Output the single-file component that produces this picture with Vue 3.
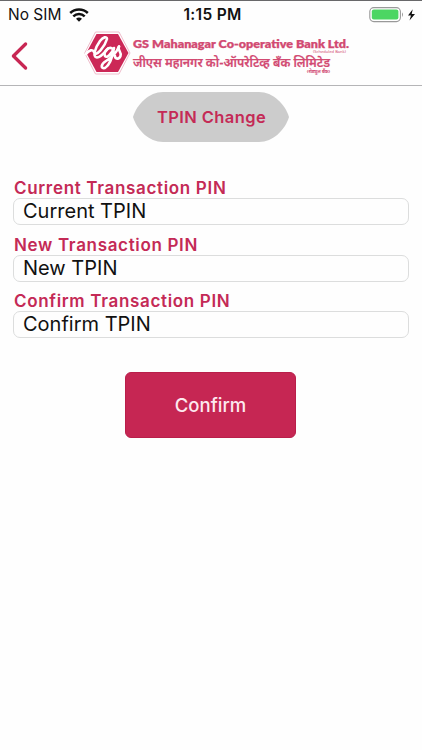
<script setup>
const fields = [
  { id: 'current', label: 'Current Transaction PIN', value: 'Current TPIN' },
  { id: 'new', label: 'New Transaction PIN', value: 'New TPIN' },
  { id: 'confirm', label: 'Confirm Transaction PIN', value: 'Confirm TPIN' },
]
</script>

<template>
  <main class="screen">
    <div class="status">
      <div class="carrier">
        <span>No SIM</span>
        <svg class="wifi" width="20" height="14" viewBox="0 0 20 14" fill="none" stroke="#111" stroke-width="2.5">
          <path d="M1.2 5 C6 .2 14 .2 18.8 5" />
          <path d="M4.3 8.3 C7.6 5.1 12.4 5.1 15.7 8.3" />
          <path d="M7 10.8 Q10 8.2 13 10.8 L10 13.7Z" fill="#111" stroke="none" />
        </svg>
      </div>
      <span class="time">1:15 PM</span>
      <svg class="battery" width="48" height="18" viewBox="0 0 48 18">
        <rect x=".8" y="1.6" width="30.6" height="14" rx="4" fill="#fff" stroke="#999" stroke-width="1.1" />
        <rect x="2.8" y="3.6" width="26.6" height="10" rx="2" fill="#4cd663" />
        <path d="M33 6.3 Q35 8.6 33 10.9Z" fill="#999" />
        <path d="M43.7 3.2 L39 9.6 H42 L40.5 14.6 L46 8 H42.7Z" fill="#111" />
      </svg>
    </div>

    <header class="nav">
      <svg class="back" width="18" height="30" viewBox="0 0 18 30" fill="none" stroke="#c82753" stroke-width="3.3" stroke-linecap="round" stroke-linejoin="round">
        <path d="M14.6 3 L2.4 15 L14.6 27" />
      </svg>
      <svg class="brand" width="270" height="48" viewBox="0 0 270 48">
        <path d="M10.5 2 H34 L45 23 L34 44 H10.5 L-.3 23Z" fill="#fff" stroke="#efbccb" stroke-width="1" />
        <path d="M11.5 4 H33 L43.5 23 L33 42 H11.5 L1.3 23Z" fill="#cc2857" />
        <g fill="none" stroke="#fff" stroke-linecap="round" stroke-linejoin="round" stroke-width="2.6">
          <path d="M1 24 C4 20 8 19 9 22 C11 28 20 16 22 9 C22 6 18 7 15 11 C10 18 7 27 12 27.500 C16 27.500 20 22 23 18.500" />
          <path d="M28 19 C24 15.500 18 22 20 26 C22 29 27 23 29 18 C28 24 25 35 20 38 C15 39 16 34 21 31 C26 28 31 24 34 16.500" />
          <path d="M34 16.500 C32 20 37 22 35.500 26 C34 30 30 29 30 26" />
        </g>
        <g fill="#d24a72" stroke="#d24a72">
          <text class="brand-en" x="48" y="17.500" textLength="216" lengthAdjust="spacingAndGlyphs" stroke-width=".25">GS Mahanagar Co-operative Bank Ltd.</text>
          <text class="brand-hi" x="48" y="36.500" textLength="197" lengthAdjust="spacingAndGlyphs" stroke-width=".2">जीएस महानगर को-ऑपरेटिव्ह बँक लिमिटेड</text>
          <text class="tiny" x="228" y="22.500" textLength="33" lengthAdjust="spacingAndGlyphs" stroke="none">(Scheduled Bank)</text>
          <text class="tiny" x="222" y="42.500" textLength="23" lengthAdjust="spacingAndGlyphs" stroke-width=".15">(शेड्युल बँक)</text>
        </g>
      </svg>
    </header>

    <div class="title">
      <svg class="title-shape" width="156" height="50" viewBox="0 0 156 50">
        <path d="M30 0 H126 C140 0 152 12 156 25 C152 38 140 50 126 50 H30 C16 50 4 38 0 25 C4 12 16 0 30 0Z" fill="#ccc" />
      </svg>
      <h1>TPIN Change</h1>
    </div>

    <form class="form" @submit.prevent>
      <div v-for="field in fields" :key="field.id" class="field">
        <label :for="field.id">{{ field.label }}</label>
        <div :id="field.id" class="box">{{ field.value }}</div>
      </div>
      <button type="submit">Confirm</button>
    </form>
  </main>
</template>

<style>
body {
  background: #fefefe;
}
</style>

<style scoped>
.screen {
  box-sizing: border-box;
  height: 750px;
  overflow: hidden;
  border-top: 1px solid #68686a;
  background: #fefefe;
  color: #111;
  font-family: Inter, "Liberation Sans", sans-serif;
  display: flex;
  flex-direction: column;
  align-items: center;
}
.status {
  box-sizing: border-box;
  width: 100%;
  height: 27px;
  padding: 0 5px 0 8px;
  display: grid;
  grid-template-columns: 1fr auto 1fr;
  align-items: center;
  font-size: 15.5px;
}
.carrier {
  display: flex;
  align-items: center;
  gap: 8px;
}
.time {
  font-weight: 600;
  letter-spacing: 0.3px;
}
.battery {
  justify-self: end;
}
.nav {
  box-sizing: border-box;
  width: 100%;
  height: 58px;
  padding: 2px 0 0 11px;
  border-bottom: 1px solid #b5b5b7;
  display: flex;
  align-items: flex-start;
  gap: 56px;
}
.brand {
  overflow: visible;
}
.back {
  margin-top: 11px;
}
.brand-en {
  font: 800 11.5px Lato, sans-serif;
}
.brand-hi {
  font: 600 12.5px "Noto Sans Devanagari", "Noto Sans", sans-serif;
}
.tiny {
  font: 400 4px "Noto Sans", sans-serif;
}
.title {
  width: 156px;
  height: 50px;
  margin-top: 6px;
  display: grid;
  place-items: center;
}
.title-shape,
.title h1 {
  grid-area: 1 / 1;
}
h1 {
  margin: 0;
  padding-left: 1px;
  font-size: 16.5px;
  font-weight: 600;
  letter-spacing: 0.4px;
  white-space: nowrap;
  color: #c42a56;
}
.form {
  box-sizing: border-box;
  width: 100%;
  padding: 36px 13px 0;
  display: flex;
  flex-direction: column;
}
.field {
  height: 56.6px;
}
label {
  display: block;
  height: 20px;
  padding-left: 1px;
  font-size: 17px;
  line-height: 20px;
  font-weight: 600;
  letter-spacing: 0.67px;
  color: #c42a56;
  white-space: nowrap;
}
.box {
  box-sizing: border-box;
  height: 27px;
  padding-left: 9px;
  border: 1px solid #dcdddd;
  border-radius: 7px;
  font-size: 20px;
  line-height: 24px;
  white-space: nowrap;
}
button {
  width: 171px;
  height: 66px;
  margin: 24px 0 0 112px;
  padding: 0;
  border: 1px solid #b91f4a;
  border-radius: 6px;
  background: #c62653;
  color: #fde9ef;
  font: 500 18.5px Inter, sans-serif;
}
</style>
